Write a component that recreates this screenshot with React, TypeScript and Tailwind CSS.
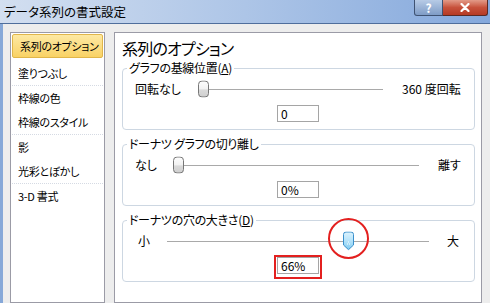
import React from 'react'

const font = "font-['Noto_Sans_CJK_JP','Noto_Sans',sans-serif] [font-feature-settings:'palt']"

function GrayThumb() {
  return (
    <svg width="11" height="17" viewBox="0 0 11 17">
      <defs>
        <linearGradient id="gt" x1="0" y1="0" x2="0" y2="1">
          <stop offset="0" stopColor="#fdfdfd" />
          <stop offset="0.5" stopColor="#f2f2f2" />
          <stop offset="0.55" stopColor="#dadada" />
          <stop offset="1" stopColor="#cfcfcf" />
        </linearGradient>
      </defs>
      <rect x="0.5" y="0.5" width="10" height="16" rx="3.5" fill="url(#gt)" stroke="#777" />
    </svg>
  )
}

function BlueThumb() {
  return (
    <svg width="11" height="19" viewBox="0 0 11 19">
      <defs>
        <linearGradient id="bt" x1="0" y1="0" x2="0" y2="1">
          <stop offset="0" stopColor="#dcf3fe" />
          <stop offset="0.5" stopColor="#b5e3fa" />
          <stop offset="1" stopColor="#7fcbf1" />
        </linearGradient>
      </defs>
      <path d="M0.5 3 Q0.5 0.5 3 0.5 H8 Q10.5 0.5 10.5 3 V13.5 L5.5 18.2 L0.5 13.5 Z" fill="url(#bt)" stroke="#3a8fcb" />
      <rect x="4" y="12" width="1" height="1" fill="#ffffff" />
      <rect x="6" y="12" width="1" height="1" fill="#ffffff" />
      <rect x="5" y="10" width="1" height="1" fill="#ffffff" />
    </svg>
  )
}

function Slider({ width, thumbLeft, blue, ring }: { width: number; thumbLeft: number; blue?: boolean; ring?: boolean }) {
  return (
    <div className="relative h-[18px] flex items-center shrink-0" style={{ width }}>
      <div className="h-px w-full bg-[#a9a9a9]" />
      <div className="absolute top-1/2 -translate-y-1/2 flex" style={{ left: thumbLeft }}>
        {blue ? <BlueThumb /> : <GrayThumb />}
      </div>
      {ring && (
        <div
          className="absolute w-[41px] h-[41px] rounded-full border-2 border-[#e3201f] -top-[14px]"
          style={{ left: thumbLeft - 15 }}
        />
      )}
    </div>
  )
}

function ValueBox({ value }: { value: string }) {
  return (
    <div className="w-[42px] h-[17px] border border-[#a5a5a5] bg-white text-[12px] leading-[15px] pl-[3px] text-black">
      {value}
    </div>
  )
}

function Group({ label, children }: { label: React.ReactNode; children: React.ReactNode }) {
  return (
    <div className="relative h-[62px] w-[353px] border border-[#cdd7e2] rounded-[4px]">
      <span className="absolute -top-[8px] left-[4px] px-[2px] bg-white text-[12px] leading-[14px] tracking-[-0.3px] whitespace-nowrap text-black">
        {label}
      </span>
      {children}
    </div>
  )
}

export default function App() {
  const items = [
    ['塗りつぶし'],
    ['枠線の色', '枠線のスタイル'],
    ['影', '光彩とぼかし'],
    ['3-D 書式'],
  ]

  return (
    <div className={`w-[490px] h-[303px] overflow-hidden bg-[#ededed] flex flex-col text-black ${font}`}>
      {/* title bar */}
      <div className="h-[23px] shrink-0 flex bg-gradient-to-r from-[#d3dff0] via-[#adc5e7] to-[#84a8dc]">
        <div className="pl-[4px] pt-[3px] text-[12.5px] leading-[17px] whitespace-nowrap text-black">データ系列の書式設定</div>
        <div className="ml-auto mr-[2px] flex self-start">
          <div className="w-[29px] h-[16px] rounded-bl-[3px] border border-t-0 border-[#3e5272] bg-gradient-to-b from-[#b7cbe6] to-[#7f9cc6] flex items-center justify-center text-white text-[12px] font-bold leading-[14px]">
            ?
          </div>
          <div className="w-[45px] h-[16px] rounded-br-[3px] border border-t-0 border-l-0 border-[#5a2a24] bg-gradient-to-b from-[#e29a88] via-[#c7513b] to-[#b53a24] flex items-center justify-center">
            <svg width="10" height="9" viewBox="0 0 10 9">
              <path d="M1.5 1 L8.5 8 M8.5 1 L1.5 8" stroke="#ffffff" strokeWidth="2.2" strokeLinecap="round" />
            </svg>
          </div>
        </div>
      </div>
      <div className="h-px shrink-0 bg-[#4f6e9c]" />

      {/* body */}
      <div className="flex-1 flex border-l-[3px] border-[#86a8d8] pl-[7px] pt-[8px] pr-[8px] gap-[9px]">
        {/* left list */}
        <div className="w-[95px] shrink-0 border border-[#9b9ba6] bg-white text-[11px] leading-[24px] tracking-[-0.3px] whitespace-nowrap">
          <div className="mt-px mx-px h-[24px] rounded-[2px] border border-[#e0b64a] bg-gradient-to-b from-[#fde9a2] to-[#f9d264] pl-[7px] leading-[22px]">
            系列のオプション
          </div>
          <div className="mx-px h-[3px]" />
          {items.map((grp, gi) => (
            <div key={gi}>
              {gi > 0 && <div className="mx-px border-t border-dotted border-[#d5dae3]" />}
              {grp.map((t) => (
                <div key={t} className="h-[24px] pl-[7px]">
                  {t}
                </div>
              ))}
            </div>
          ))}
        </div>

        {/* right panel */}
        <div className="flex-1 border border-[#9b9ba6] bg-white pl-[7px]">
          <div className="pt-[5px] text-[16px] leading-[20px] tracking-[-0.8px] whitespace-nowrap">系列のオプション</div>

          <div className="mt-[10px] flex flex-col gap-[14px] text-[12px] leading-[18px] whitespace-nowrap">
            <Group label={<>グラフの基線位置(<span className="underline">A</span>)</>}>
              <div className="pt-[11px] pl-[12px] flex items-center h-[29px]">
                <div className="w-[63px] shrink-0">回転なし</div>
                <Slider width={185} thumbLeft={0} />
                <div className="ml-[19px]">360 度回転</div>
              </div>
              <div className="mt-[7px] ml-[154px]">
                <ValueBox value="0" />
              </div>
            </Group>

            <Group label="ドーナツ グラフの切り離し">
              <div className="pt-[11px] pl-[12px] flex items-center h-[29px]">
                <div className="w-[38px] shrink-0">なし</div>
                <Slider width={246} thumbLeft={0} />
                <div className="ml-[19px]">離す</div>
              </div>
              <div className="mt-[7px] ml-[154px]">
                <ValueBox value="0%" />
              </div>
            </Group>

            <Group label={<>ドーナツの穴の大きさ(<span className="underline">D</span>)</>}>
              <div className="pt-[11px] pl-[15px] flex items-center h-[29px]">
                <div className="w-[29px] shrink-0">小</div>
                <Slider width={262} thumbLeft={176} blue ring />
                <div className="ml-[18px]">大</div>
              </div>
              <div className="mt-[5px] ml-[151px] w-[48px] h-[24px] border-2 border-[#e3201f] pl-px pt-0">
                <ValueBox value="66%" />
              </div>
            </Group>
          </div>
        </div>
      </div>
    </div>
  )
}
